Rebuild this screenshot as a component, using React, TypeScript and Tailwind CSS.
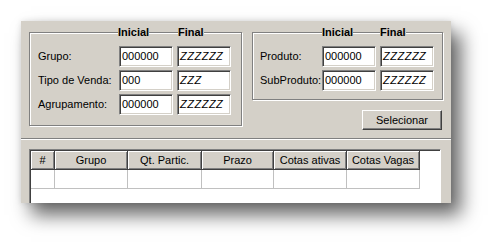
const FONT = "font-['Liberation_Sans',Arial,sans-serif]";

const COLS = [
  { label: "#", w: "w-[24px]" },
  { label: "Grupo", w: "w-[73px]" },
  { label: "Qt. Partic.", w: "w-[74px]" },
  { label: "Prazo", w: "w-[72px]" },
  { label: "Cotas ativas", w: "w-[73px]" },
  { label: "Cotas Vagas", w: "w-[73px]" },
];

// campo "afundado" estilo Windows clássico
function Field({ value, italic }: { value: string; italic?: boolean }) {
  return (
    <div className="flex h-[21px] w-[54px] items-center border border-t-[#808080] border-l-[#808080] border-b-white border-r-white bg-white pl-[2px] shadow-[inset_1px_1px_0_#404040,inset_-1px_-1px_0_#d4d0c8]">
      <span className={italic ? "italic tracking-[0.5px]" : ""}>{value}</span>
    </div>
  );
}

function GroupBox({ rows, labelW, legendIni, legendFim, className }: {
  rows: { label: string; ini: string; fim: string }[];
  labelW: string;
  legendIni: string;
  legendFim: string;
  className: string;
}) {
  return (
    <div className={"relative border border-[#808080] shadow-[inset_1px_1px_0_#fff,1px_1px_0_#fff] " + className}>
      <span className={"absolute top-[-8px] bg-[#d4d0c8] font-bold leading-[14px] " + legendIni}>Inicial</span>
      <span className={"absolute top-[-8px] bg-[#d4d0c8] font-bold leading-[14px] " + legendFim}>Final</span>
      <div className="flex flex-col gap-y-[3px]">
        {rows.map((r) => (
          <div key={r.label} className="flex items-center">
            <span className={labelW}>{r.label}</span>
            <Field value={r.ini} />
            <div className="w-[4px]" />
            <Field value={r.fim} italic />
          </div>
        ))}
      </div>
    </div>
  );
}

export default function App() {
  return (
    <div className={"h-[245px] w-[493px] overflow-hidden bg-white pl-[21px] pt-[21px] text-[11px] text-black " + FONT}>
      <div className="h-[182px] w-[430px] overflow-hidden bg-[#d4d0c8] shadow-[10px_12px_18px_rgba(0,0,0,0.6),0_0_6px_rgba(0,0,0,0.12)]">
        {/* filtros */}
        <div className="flex h-[117px] items-start pt-[11px]">
          <GroupBox
            className="ml-[8px] w-[213px] pb-[10px] pl-[8px] pt-[13px]"
            labelW="w-[81px]"
            legendIni="left-[88px]"
            legendFim="left-[148px]"
            rows={[
              { label: "Grupo:", ini: "000000", fim: "ZZZZZZ" },
              { label: "Tipo de Venda:", ini: "000", fim: "ZZZ" },
              { label: "Agrupamento:", ini: "000000", fim: "ZZZZZZ" },
            ]}
          />
          <div className="ml-[10px] flex w-[191px] flex-col">
            <GroupBox
              className="w-[191px] pb-[8px] pl-[7px] pt-[13px]"
              labelW="w-[62px]"
              legendIni="left-[69px]"
              legendFim="left-[127px]"
              rows={[
                { label: "Produto:", ini: "000000", fim: "ZZZZZZ" },
                { label: "SubProduto:", ini: "000000", fim: "ZZZZZZ" },
              ]}
            />
            <button className="ml-auto mr-px mt-[10px] flex h-[20px] w-[80px] items-center justify-center border border-t-white border-l-white border-b-[#404040] border-r-[#404040] bg-[#d4d0c8] shadow-[inset_-1px_-1px_0_#808080]">
              Selecionar
            </button>
          </div>
        </div>

        {/* separador */}
        <div className="h-[2px] border-t border-t-[#808080] border-b border-b-white" />

        {/* grade */}
        <div className="ml-[8px] mt-[9px] h-[70px] w-[412px] border border-t-[#808080] border-l-[#808080] border-b-white border-r-white bg-white shadow-[inset_1px_1px_0_#404040]">
          <div className="pl-px pt-px">
            <div className="flex">
              {COLS.map((c) => (
                <div key={c.label}
                  className={"flex h-[19px] items-center justify-center border-b border-r border-b-[#404040] border-r-[#404040] bg-[#d4d0c8] shadow-[inset_1px_1px_0_#fff,inset_-1px_-1px_0_#808080] " + c.w}>
                  {c.label}
                </div>
              ))}
            </div>
            <div className="flex">
              {COLS.map((c) => (
                <div key={c.label} className={"h-[19px] border-b border-r border-[#c0c0c0] " + c.w} />
              ))}
            </div>
          </div>
        </div>
      </div>
    </div>
  );
}
